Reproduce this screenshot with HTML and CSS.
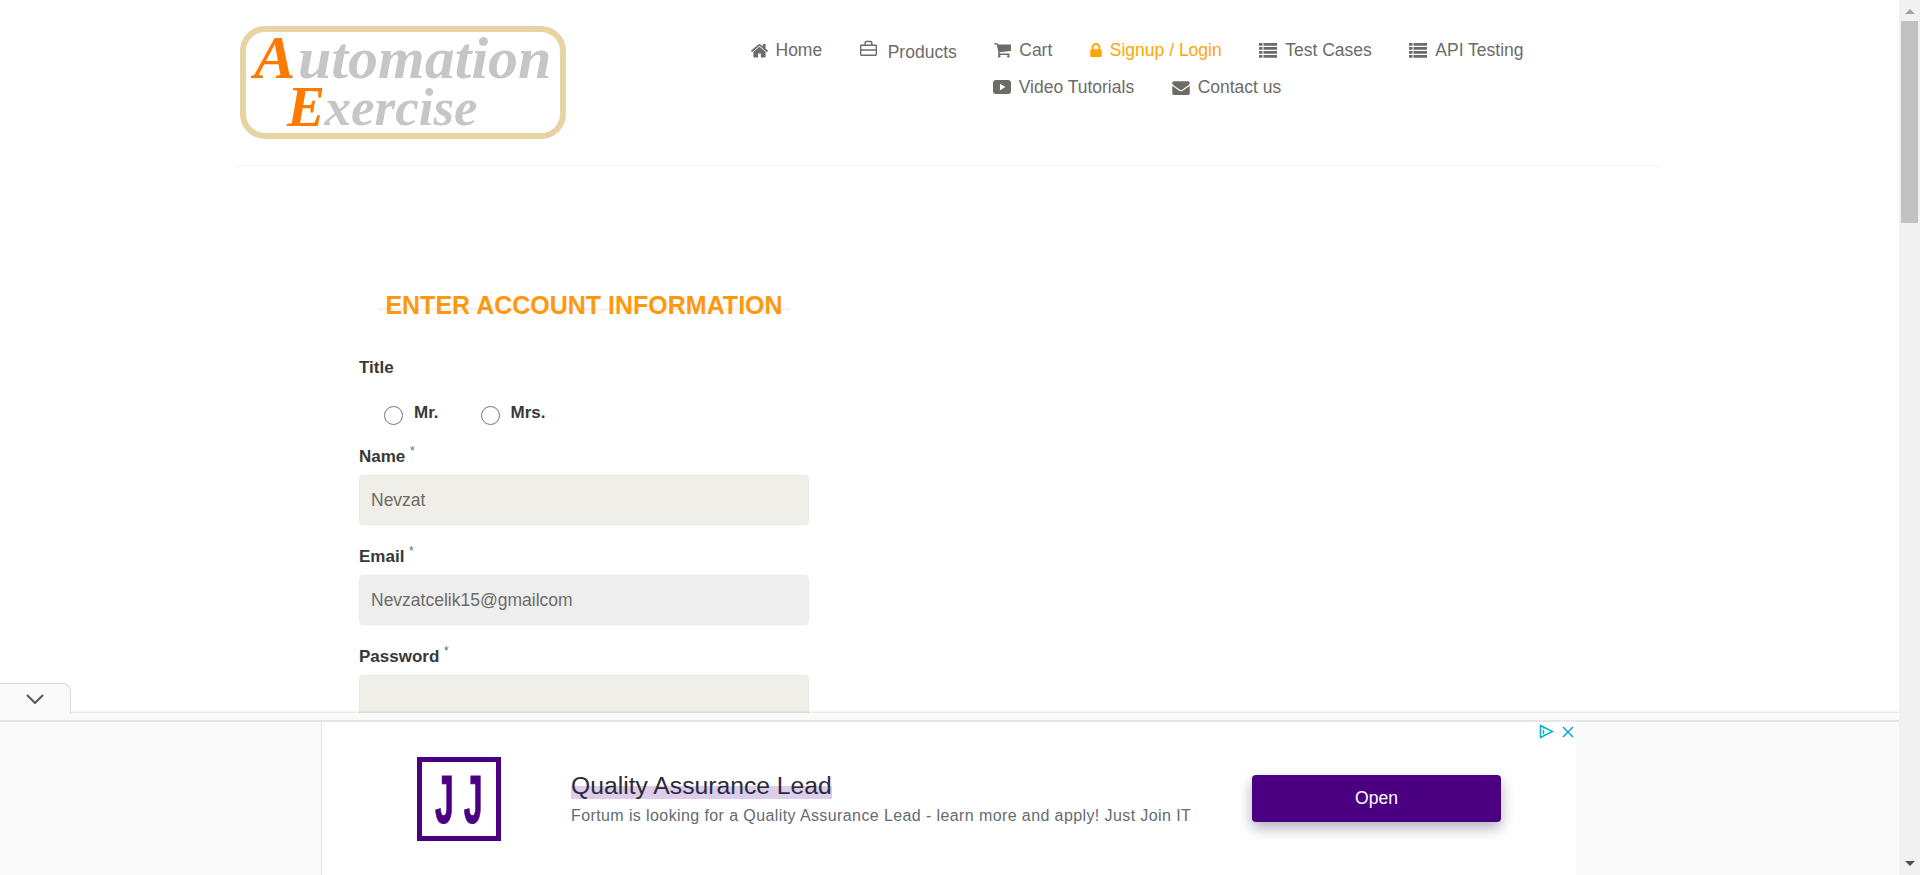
FILE: index.html
```html
<!DOCTYPE html>
<html lang="en">
<head>
<meta charset="utf-8">
<title>Automation Exercise - Signup</title>
<link rel="stylesheet" href="styles.css">
</head>
<body>
<div class="app">
  <main class="page">
    <header class="header">
      <a class="logo" href="#">
        <svg width="328" height="130" viewBox="0 -8 328 130">
          <rect x="3" y="3" width="320" height="107" rx="22" fill="#fff" stroke="#e8d3a2" stroke-width="6"/>
          <text class="logo-cap" x="14" y="52">A</text>
          <text class="logo-word" x="58" y="52">utomation</text>
          <text class="logo-cap-low" x="47" y="100">E</text>
          <text class="logo-low" x="84.500" y="99">xercise</text>
        </svg>
      </a>
      <nav class="nav">
        <a class="nav-item" href="#"><svg class="ico" width="17" height="15" viewBox="90 200 1612 1340"><path d="M1472 992v480q0 26-19 45t-45 19h-384v-384h-256v384h-384q-26 0-45-19t-19-45v-480q0-1 .5-3t.5-3l575-474 575 474q1 2 1 6zm223-69l-62 74q-8 9-21 11h-3q-13 0-21-7l-692-577-692 577q-12 8-24 7-13-2-21-11l-62-74q-8-10-7-23.500t11-21.500l719-599q32-26 76-26t76 26l244 204v-195q0-14 9-23t23-9h192q14 0 23 9t9 23v408l219 182q10 8 11 21.500t-7 23.500z"/></svg>Home</a>
        <a class="nav-item nav-item-low" href="#"><svg class="ico ico-raised" width="17" height="17" viewBox="0 0 17 17"><path class="line" d="M1.200 5.200h14.600a.6.6 0 0 1 .6.600v8.400a1 1 0 0 1-1 1H1.600a1 1 0 0 1-1-1V5.800a.6.6 0 0 1 .6-.6zM.8 10h15.400M5.200 5V2.500a1 1 0 0 1 1-1h4.600a1 1 0 0 1 1 1V5"/></svg>Products</a>
        <a class="nav-item" href="#"><svg class="ico" width="17" height="16" viewBox="64 192 1664 1472"><path d="M704 1536q0 52-38 90t-90 38-90-38-38-90 38-90 90-38 90 38 38 90zm896 0q0 52-38 90t-90 38-90-38-38-90 38-90 90-38 90 38 38 90zm128-1088v512q0 24-16.500 42.500t-40.500 21.500l-1044 122q13 60 13 70 0 16-24 64h920q26 0 45 19t19 45-19 45-45 19h-1024q-26 0-45-19t-19-45q0-11 8-31.500t16-36 21.500-40 15.500-29.500l-177-823h-204q-26 0-45-19t-19-45 19-45 45-19h256q16 0 28.500 6.500t19.500 15.500 13 24.500 8 26 5.500 29.500 4.500 26h1201q26 0 45 19t19 45z"/></svg>Cart</a>
        <a class="nav-item nav-active" href="#"><svg class="ico ico-lock" width="12" height="14" viewBox="288 128 1216 1408"><path d="M640 768h512v-192q0-106-75-181t-181-75-181 75-75 181v192zm832 96v576q0 40-28 68t-68 28h-960q-40 0-68-28t-28-68v-576q0-40 28-68t68-28h32v-192q0-184 132-316t316-132 316 132 132 316v192h32q40 0 68 28t28 68z"/></svg>Signup / Login</a>
        <a class="nav-item" href="#"><svg class="ico" width="18" height="15" viewBox="0 0 18 15"><path d="M0 0h3.500v2.700H0zM4.500 0H18v2.700H4.500zM0 4h3.500v2.700H0zM4.500 4H18v2.700H4.500zM0 8h3.500v2.700H0zM4.500 8H18v2.700H4.500zM0 12h3.500v2.700H0zM4.500 12H18v2.700H4.500z"/></svg>Test Cases</a>
        <a class="nav-item" href="#"><svg class="ico" width="18" height="15" viewBox="0 0 18 15"><path d="M0 0h3.500v2.700H0zM4.500 0H18v2.700H4.500zM0 4h3.500v2.700H0zM4.500 4H18v2.700H4.500zM0 8h3.500v2.700H0zM4.500 8H18v2.700H4.500zM0 12h3.500v2.700H0zM4.500 12H18v2.700H4.500z"/></svg>API Testing</a>
        <a class="nav-item" href="#"><svg class="ico" width="18" height="14" viewBox="0 0 18 14"><path fill-rule="evenodd" d="M3 0h12a3 3 0 0 1 3 3v8a3 3 0 0 1-3 3H3a3 3 0 0 1-3-3V3a3 3 0 0 1 3-3zm4 3.800v6.400L12.500 7z"/></svg>Video Tutorials</a>
        <a class="nav-item" href="#"><svg class="ico" width="18" height="15" viewBox="0 128 1792 1536"><path d="M1792 710v794q0 66-47 113t-113 47h-1472q-66 0-113-47t-47-113v-794q44 49 101 87 362 246 497 345 57 42 92.500 65.500t94.500 48 110 24.500h2q51 0 110-24.500t94.500-48 92.500-65.500q170-123 498-345 57-39 100-87zm0-294q0 79-49 151t-122 123q-376 261-468 325-10 7-42.500 30.500t-54 38-52 32.500-57.500 27-50 9h-2q-23 0-50-9t-57.500-27-52-32.500-54-38-42.500-30.500q-91-64-262-182.500t-205-142.500q-62-42-117-115.500t-55-136.500q0-78 41.500-130t118.500-52h1472q65 0 112.500 47t47.500 113z"/></svg>Contact us</a>
      </nav>
    </header>

    <form class="signup">
      <h2 class="title">ENTER ACCOUNT INFORMATION</h2>
      <div class="label label-title">Title</div>
      <div class="radios">
        <label class="radio"><input type="radio" name="title">Mr.</label>
        <label class="radio"><input type="radio" name="title">Mrs.</label>
      </div>
      <label class="label" for="name">Name <sup class="req">*</sup></label>
      <input class="field" id="name" type="text" value="Nevzat">
      <label class="label" for="email">Email <sup class="req">*</sup></label>
      <input class="field field-locked" id="email" type="text" value="Nevzatcelik15@gmailcom">
      <label class="label" for="password">Password <sup class="req">*</sup></label>
      <input class="field" id="password" type="password">
    </form>

    <aside class="anchor">
      <button class="anchor-tab" type="button" aria-label="Collapse">
        <svg width="18" height="10" viewBox="0 0 18 10"><path d="M1 1l8 8 8-8"/></svg>
      </button>
      <div class="anchor-body">
        <div class="ad-row">
          <div class="ad">
            <div class="ad-logo"><span class="ad-logo-text">JJ</span></div>
            <div class="ad-copy">
              <div class="ad-title"><span class="ad-mark">Quality Assurance Lead</span></div>
              <div class="ad-sub">Fortum is looking for a Quality Assurance Lead - learn more and apply! Just Join IT</div>
            </div>
            <a class="ad-open" href="#">Open</a>
            <div class="ad-flags">
              <svg width="15" height="15" viewBox="0 0 15 15"><path d="M1.500 1.500v12L13.500 7.500z"/><path d="M4.500 6v4M4.500 3.800v.8"/></svg>
              <svg width="12" height="12" viewBox="0 0 12 12"><path d="M1 1l10 10M11 1L1 11"/></svg>
            </div>
          </div>
        </div>
      </div>
    </aside>
  </main>

  <div class="scrollbar" aria-hidden="true">
    <span class="arrow arrow-up"></span>
    <span class="thumb"></span>
    <span class="arrow arrow-down"></span>
  </div>
</div>
</body>
</html>
```

FILE: styles.css
```css
* { box-sizing: border-box; }
html, body { margin: 0; height: 100%; overflow: hidden; }
body { font-family: "Liberation Sans", Arial, sans-serif; color: #696763; background: #fff; }
a { text-decoration: none; color: inherit; }

.app { display: flex; height: 875px; }
.page { position: relative; flex: 1 1 auto; min-width: 0; height: 875px; overflow: hidden; }

/* header */
.header {
  display: flex;
  width: 1425px;
  height: 166px;
  margin-left: 235px;
  border-bottom: 1px solid #f5f5f5;
}
.logo { display: block; flex: 0 0 472px; padding: 18px 0 0 5px; }
.logo svg { display: block; }
.logo-cap { font: italic bold 62px "Liberation Serif", serif; fill: #ff7a00; }
.logo-cap-low { font: italic bold 57px "Liberation Serif", serif; fill: #ff7a00; }
.logo-word { font: italic bold 60px "Liberation Serif", serif; fill: #c6c6c6; }
.logo-low { font: italic bold 53px "Liberation Serif", serif; fill: #c6c6c6; }

.nav {
  display: flex;
  flex-wrap: wrap;
  justify-content: center;
  align-content: flex-start;
  column-gap: 37.500px;
  row-gap: 17px;
  width: 860px;
  padding-top: 40px;
}
.nav-item { display: flex; align-items: center; height: 20px; font-size: 17.500px; line-height: 20px; color: #6d6b67; }
.nav-item-low { padding-top: 4px; }
.nav-active { color: #ffa500; }
.ico { flex: none; margin-right: 8px; fill: currentColor; }
.ico-raised { margin-right: 11px; margin-top: -7px; }
.line { fill: none; stroke: currentColor; stroke-width: 1.500; }

/* form */
.signup { display: flex; flex-direction: column; width: 450px; margin: 125px 0 0 359px; }
.title {
  width: 412px;
  margin: 0 0 0 19px;
  font-size: 25px;
  line-height: 28px;
  font-weight: bold;
  text-align: center;
  color: #fe980f;
  background: linear-gradient(#f4f4f4, #f4f4f4) center 17px / 100% 3px no-repeat;
}
.label { display: block; font-size: 17px; line-height: 20px; font-weight: bold; color: #383838; margin: 0 0 8px; }
.label-title { margin: 39px 0 0; }
.radios { display: flex; gap: 42px; margin: 26px 0 22px 25px; height: 21px; }
.radio { display: flex; align-items: flex-start; gap: 11px; font-size: 17px; font-weight: bold; line-height: 18px; color: #383838; }
.radio input { width: 19px; height: 19px; margin: 2px 0 0; }
.req { font-size: 12px; font-weight: normal; color: #696763; line-height: 0; vertical-align: 7px; }
.field {
  display: block;
  flex: none;
  width: 450px;
  height: 50px;
  margin: 0 0 22px;
  padding: 0 11px;
  border: 1px solid #e9e8e2;
  border-radius: 4px;
  background: #efeee8;
  font: 17.500px "Liberation Sans", Arial, sans-serif;
  color: #6d6b67;
}
.field-locked { background: #eee; border-color: #ebebeb; }

/* anchored ad */
.anchor { position: absolute; left: 0; right: 0; top: 713px; bottom: 0; }
.anchor-tab {
  position: absolute;
  z-index: 1;
  left: 0;
  top: -30px;
  display: flex;
  align-items: center;
  justify-content: center;
  width: 71px;
  height: 31px;
  padding: 0;
  border: 1px solid #dcdcdc;
  border-left: 0;
  border-bottom: 0;
  border-radius: 0 8px 0 0;
  background: #fafafa;
}
.anchor-tab svg { fill: none; stroke: #555; stroke-width: 2; }
.anchor-body {
  height: 162px;
  padding-top: 7px;
  background: #fafafa;
  box-shadow: 0 -1px 2px rgba(0, 0, 0, .12);
}
.ad-row { height: 155px; border-top: 2px solid #e6e6e6; }
.ad {
  position: relative;
  display: flex;
  align-items: flex-start;
  width: 1255px;
  height: 153px;
  margin-left: 321px;
  border-left: 1px solid #e4e4e4;
  background: #fff;
}
.ad-logo {
  display: flex;
  align-items: center;
  justify-content: center;
  flex: none;
  width: 84px;
  height: 84px;
  margin: 35px 70px 0 95px;
  border: 5px solid #4b0082;
  overflow: hidden;
}
.ad-logo-text {
  display: block;
  padding-left: 20px;
  font-size: 68px;
  line-height: 68px;
  font-weight: bold;
  letter-spacing: 20px;
  color: #4b0082;
  -webkit-text-stroke: 1px #4b0082;
  transform: scaleX(.5);
}
.ad-copy { flex: none; width: 681px; margin-top: 50px; }
.ad-title { font-size: 24.700px; line-height: 28px; color: #2a2a3a; }
.ad-mark { background: linear-gradient(#dccdea, #dccdea) 0 14px / 100% 13px no-repeat; }
.ad-sub { margin-top: 6px; font-size: 16px; line-height: 20px; letter-spacing: .4px; color: #666a72; white-space: nowrap; }
.ad-open {
  flex: none;
  width: 249px;
  height: 47px;
  margin-top: 53px;
  border-radius: 4px;
  background: #4b0082;
  box-shadow: 0 6px 14px rgba(60, 60, 90, .4);
  color: #fff;
  font-size: 17.500px;
  line-height: 46px;
  text-align: center;
}
.ad-flags { position: absolute; top: 2px; right: 2px; display: flex; align-items: center; gap: 8px; }
.ad-flags svg { display: block; fill: none; stroke: #00aecd; stroke-width: 1.500; }

/* scrollbar */
.scrollbar {
  display: flex;
  flex-direction: column;
  align-items: center;
  flex: 0 0 21px;
  height: 875px;
  background: #f1f1f1;
}
.thumb { width: 17px; height: 202px; margin-top: 7px; background: #c1c1c1; }
.arrow { width: 0; height: 0; border-left: 5px solid transparent; border-right: 5px solid transparent; }
.arrow-up { margin-top: 9px; border-bottom: 5px solid #a3a3a3; }
.arrow-down { margin-top: auto; margin-bottom: 9px; border-top: 5px solid #505050; }
```
